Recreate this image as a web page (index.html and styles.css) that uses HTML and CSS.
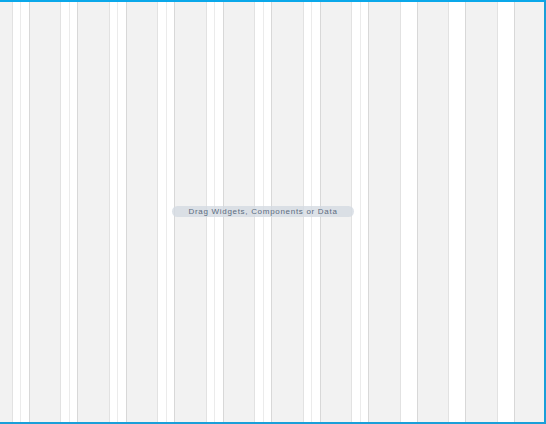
FILE: index.html
```html
<!DOCTYPE html>
<html>
<head>
<meta charset="utf-8">
<link rel="stylesheet" href="styles.css">
</head>
<body>
<div class="canvas">
  <div class="grid">
    <div class="col"></div><div class="gutter mark"></div>
    <div class="col"></div><div class="gutter mark"></div>
    <div class="col"></div><div class="gutter mark"></div>
    <div class="col"></div><div class="gutter mark"></div>
    <div class="col"></div><div class="gutter mark"></div>
    <div class="col"></div><div class="gutter mark"></div>
    <div class="col"></div><div class="gutter mark"></div>
    <div class="col"></div><div class="gutter mark"></div>
    <div class="col"></div><div class="gutter"></div>
    <div class="col"></div><div class="gutter"></div>
    <div class="col"></div><div class="gutter"></div>
    <div class="col"></div>
  </div>
  <div class="hint">Drag Widgets, Components or Data</div>
</div>
</body>
</html>
```

FILE: styles.css
```css
html, body {
  margin: 0;
  padding: 0;
  background: #ffffff;
}

.canvas {
  position: relative;
  width: 546px;
  height: 424px;
  box-sizing: border-box;
  border-top: 2px solid #0aa8ea;
  border-right: 2px solid #1a9fd9;
  border-bottom: 2px solid #1a9fd9;
  overflow: hidden;
  background: #ffffff;
}

.grid {
  display: flex;
  height: 100%;
  margin-left: -20px;
}

.col {
  flex: none;
  width: 32.5px;
  height: 100%;
  box-sizing: border-box;
  background: #f2f2f2;
  border-left: 1px solid #d8d8d8;
  border-right: 1px solid #e2e2e2;
}

.gutter {
  flex: none;
  width: 16px;
  height: 100%;
  position: relative;
}

.gutter.mark::after {
  content: "";
  position: absolute;
  left: 7.5px;
  top: 0;
  bottom: 0;
  width: 1px;
  background: #ebebeb;
}

.hint {
  position: absolute;
  left: 172px;
  top: 204px;
  width: 182px;
  height: 11px;
  border-radius: 6px;
  background: rgba(212, 218, 226, 0.78);
  color: #5c6c80;
  font-family: "Liberation Sans", Arial, sans-serif;
  font-size: 8px;
  line-height: 11px;
  letter-spacing: 0.7px;
  text-align: center;
}
```
